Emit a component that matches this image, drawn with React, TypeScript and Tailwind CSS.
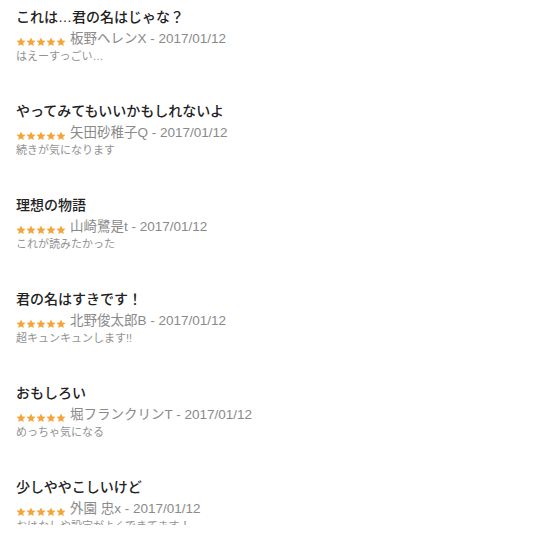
const REVIEWS = [
  { title: 'これは…君の名はじゃな？', author: '板野ヘレンX', date: '2017/01/12', body: 'はえーすっごい…' },
  { title: 'やってみてもいいかもしれないよ', author: '矢田砂稚子Q', date: '2017/01/12', body: '続きが気になります' },
  { title: '理想の物語', author: '山崎鷺是t', date: '2017/01/12', body: 'これが読みたかった' },
  { title: '君の名はすきです！', author: '北野俊太郎B', date: '2017/01/12', body: '超キュンキュンします!!' },
  { title: 'おもしろい', author: '堀フランクリンT', date: '2017/01/12', body: 'めっちゃ気になる' },
  { title: '少しややこしいけど', author: '外園 忠x', date: '2017/01/12', body: 'おはなしや設定がよくできてます！' },
];

function Star() {
  return (
    <svg viewBox="0 0 24 24" className="w-[10px] h-[10px]" fill="#f2a53a">
      <path d="M12 1l3.2 7.1 7.8.8-5.9 5.2 1.7 7.7L12 17.9l-6.8 3.9 1.7-7.7L1 8.9l7.8-.8z" />
    </svg>
  );
}

export default function App() {
  return (
    <div
      className="w-[536px] h-[540px] bg-white"
      style={{ fontFamily: '"Liberation Sans", "Noto Sans CJK JP", sans-serif' }}
    >
      <div className="h-[525px] overflow-hidden pt-[7px] pl-4">
        {REVIEWS.map((r) => (
          <div key={r.title} className="h-[94px]">
            <div className="h-5 leading-5 text-[14px] font-medium text-[#222]">{r.title}</div>
            <div className="mt-[2px] h-5 flex items-center gap-[4px]">
              <div className="flex pt-[5px]">
                <Star />
                <Star />
                <Star />
                <Star />
                <Star />
              </div>
              <span className="text-[13.5px] leading-5 text-[#8a8a8a]">
                {r.author} - {r.date}
              </span>
            </div>
            <div className="h-[14px] leading-[14px] text-[11px] text-[#929292]">{r.body}</div>
          </div>
        ))}
      </div>
    </div>
  );
}
